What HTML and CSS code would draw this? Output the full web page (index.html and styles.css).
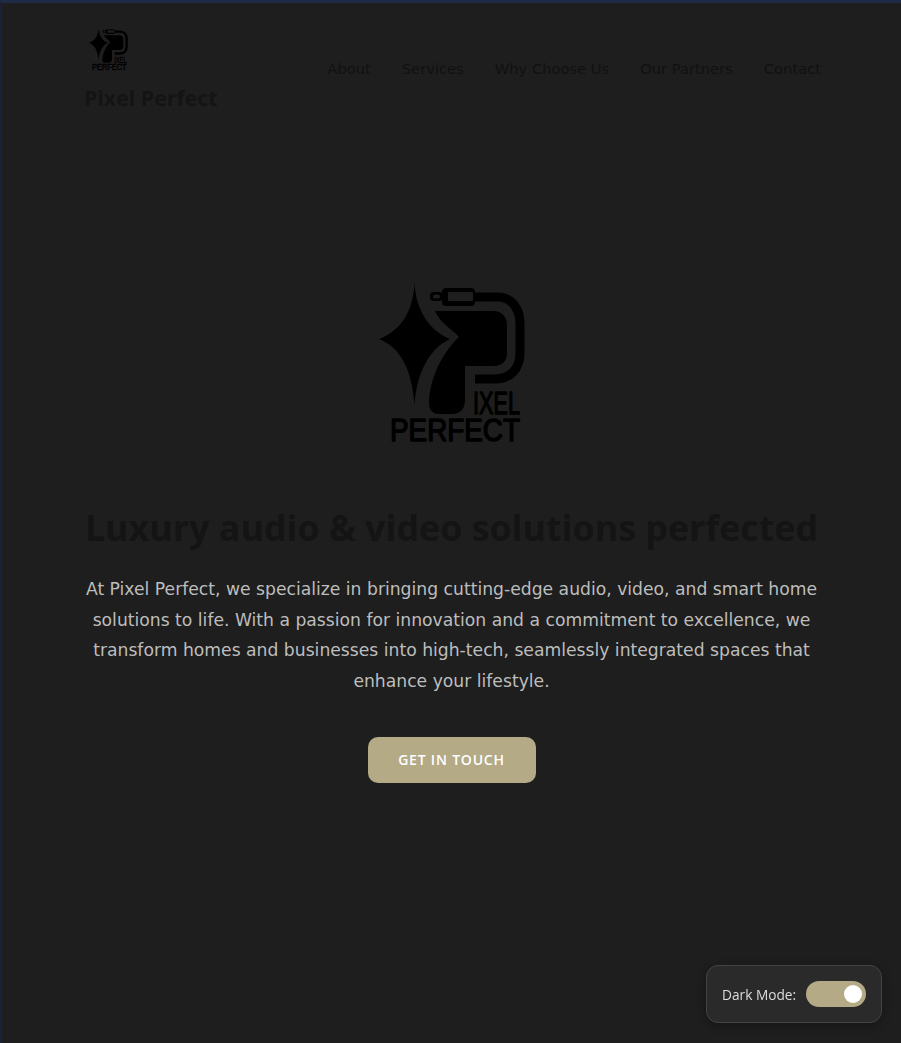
FILE: index.html
```html
<!DOCTYPE html>
<html lang="en">
<head>
    <meta charset="UTF-8">
    <meta name="viewport" content="width=device-width, initial-scale=1.0">
    <title>Pixel Perfect</title>
    <link rel="stylesheet" href="styles.css">
</head>
<body>
    <svg class="sprite" aria-hidden="true">
        <symbol id="logo" viewBox="0 0 180 190">
            <path d="M54.5 14C56 44 72 63 90 70C72 78 57 100 54.5 136C52 100 40 78 19 70C40 62 53 44 54.5 14Z"/>
            <path d="M75 42H133C142 42 147 48 147 56V84C147 92 142 97 134 97H105V131C105 140 100 145 92 145H79C72 145 69 140 69 134C69 116 78 88 99 68C92 60 80 54 75 42Z"/>
            <path class="cable" d="M115 28H137C152 28 160 40 160 55V84C160 100 150 110 135 110H115"/>
            <rect x="82" y="19" width="33" height="18" rx="4"/>
            <rect class="slot" x="88" y="23" width="25" height="9" rx="1"/>
            <rect x="70" y="23" width="13" height="9" rx="4"/>
            <rect class="slot" x="73" y="25.500" width="7" height="4" rx="2"/>
            <text x="113" y="145" textLength="47" lengthAdjust="spacingAndGlyphs" font-size="31">IXEL</text>
            <text x="30" y="172" textLength="130" lengthAdjust="spacingAndGlyphs" font-size="31">PERFECT</text>
        </symbol>
    </svg>

    <header class="site-header">
        <div class="brand">
            <svg class="brand-logo"><use href="#logo"/></svg>
            <span class="brand-name">Pixel Perfect</span>
        </div>
        <nav class="site-nav">
            <a href="#about">About</a>
            <a href="#services">Services</a>
            <a href="#why">Why Choose Us</a>
            <a href="#partners">Our Partners</a>
            <a href="#contact">Contact</a>
        </nav>
    </header>

    <main class="hero">
        <svg class="hero-logo"><use href="#logo"/></svg>
        <h1>Luxury audio &amp; video solutions perfected</h1>
        <p>At Pixel Perfect, we specialize in bringing cutting-edge audio, video, and smart home solutions to life. With a passion for innovation and a commitment to excellence, we transform homes and businesses into high-tech, seamlessly integrated spaces that enhance your lifestyle.</p>
        <a class="cta" href="#contact">GET IN TOUCH</a>
    </main>

    <div class="theme-toggle">
        <span class="toggle-label">Dark Mode:</span>
        <span class="switch"><span class="knob"></span></span>
    </div>
</body>
</html>
```

FILE: styles.css
```css
html, body {
    height: 100%;
}

body {
    margin: 0;
    box-sizing: border-box;
    min-height: 1043px;
    overflow: hidden;
    background-color: #1e1e1e;
    border-top: 3px solid #1f2a44;
    border-left: 2px solid #1a2138;
    font-family: "Open Sans", sans-serif;
}

.sprite {
    display: none;
}

.cable {
    fill: none;
    stroke: #000;
    stroke-width: 9;
}

.slot {
    fill: #1e1e1e;
}

symbol text {
    font-family: "Liberation Sans Narrow", "Liberation Sans", sans-serif;
    stroke: #000;
    stroke-width: 1.4;
    stroke-linejoin: round;
}

.site-header {
    display: flex;
    justify-content: space-between;
    align-items: center;
    padding: 21px 80px 0 82px;
}

.brand {
    display: flex;
    flex-direction: column;
    align-items: flex-start;
}

.brand-logo {
    width: 48px;
    height: 51px;
    fill: #000;
    margin-bottom: 7px;
}

.brand-name {
    font-size: 21.3px;
    font-weight: 700;
    line-height: 32px;
    color: #141414;
}

.site-nav {
    display: flex;
    gap: 31px;
    margin-top: -2px;
}

.site-nav a {
    font-family: "DejaVu Sans", sans-serif;
    font-size: 14.7px;
    color: #111;
    text-decoration: none;
}

.hero {
    display: flex;
    flex-direction: column;
    align-items: center;
    margin-top: 155px;
    padding: 0 80px;
    text-align: center;
}

.hero-logo {
    width: 180px;
    height: 190px;
    margin-right: 3px;
    fill: #000;
}

.hero h1 {
    margin: 44px 0 0;
    font-size: 35.8px;
    line-height: 48px;
    font-weight: 700;
    color: #141414;
    white-space: nowrap;
}

.hero p {
    width: 745px;
    margin: 23px 0 0;
    font-family: "DejaVu Sans", sans-serif;
    font-size: 17.2px;
    line-height: 30.6px;
    color: #bdbdbd;
}

.cta {
    margin-top: 41px;
    width: 168px;
    height: 46px;
    line-height: 46px;
    border-radius: 10px;
    background-color: #b5aa86;
    color: #fff;
    font-size: 14px;
    font-weight: 600;
    letter-spacing: 0.8px;
    text-decoration: none;
}

.theme-toggle {
    position: fixed;
    right: 19px;
    bottom: 20px;
    box-sizing: border-box;
    width: 176px;
    height: 58px;
    display: flex;
    align-items: center;
    gap: 10px;
    padding: 0 15px;
    background-color: #2a2a2a;
    border: 1px solid #444;
    border-radius: 12px;
    box-shadow: 0 2px 10px rgba(0, 0, 0, 0.3);
    font-size: 13.7px;
    color: #ddd;
}

.toggle-label {
    white-space: nowrap;
}

.switch {
    flex-shrink: 0;
    display: flex;
    justify-content: flex-end;
    align-items: center;
    box-sizing: border-box;
    width: 60px;
    height: 26px;
    padding-right: 4px;
    border-radius: 13px;
    background-color: #b5aa86;
}

.knob {
    width: 18px;
    height: 18px;
    border-radius: 50%;
    background-color: #fff;
}
```
